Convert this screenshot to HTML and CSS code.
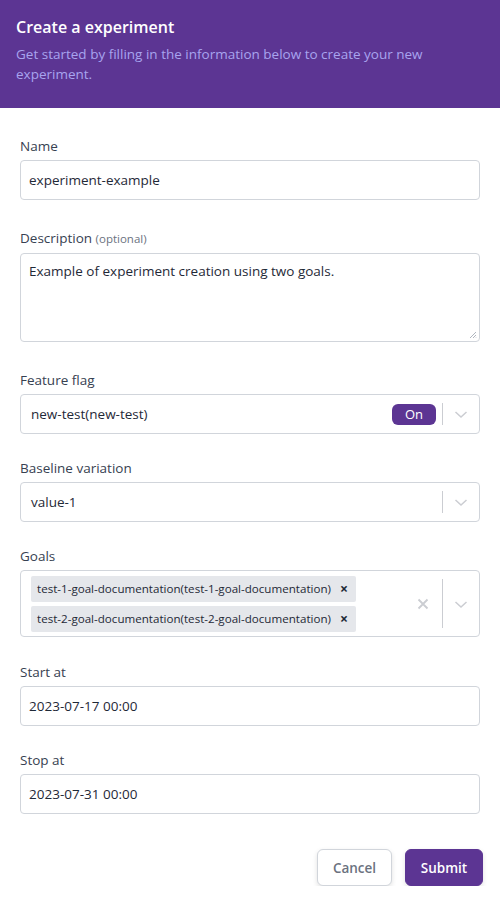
FILE: index.html
```html
<!DOCTYPE html>
<html>
<head>
<meta charset="utf-8">
<link rel="stylesheet" href="styles.css">
</head>
<body>
<div class="page">
  <header class="header">
    <h1 class="title">Create a experiment</h1>
    <p class="subtitle">Get started by filling in the information below to create your new experiment.</p>
  </header>
  <form class="form">
    <div class="field">
      <label class="label">Name</label>
      <div class="input">experiment-example</div>
    </div>
    <div class="field">
      <label class="label">Description <span class="optional">(optional)</span></label>
      <div class="textarea">Example of experiment creation using two goals.
        <svg class="grip" width="8" height="8" viewBox="0 0 8 8"><path d="M7 1L1 7M7 4L4 7M7 6.5L6.5 7" stroke="#9ca3af" stroke-width="0.8"/></svg>
      </div>
    </div>
    <div class="field tight">
      <label class="label">Feature flag</label>
      <div class="select">
        <div class="value">new-test(new-test)</div>
        <span class="badge">On</span>
        <div class="indicators">
          <span class="sep"></span>
          <svg class="chev" width="20" height="20" viewBox="0 0 20 20"><path d="M4.5 8l5.5 5 5.5-5" fill="none" stroke="#cbcdd2" stroke-width="1.5"/></svg>
        </div>
      </div>
    </div>
    <div class="field tight">
      <label class="label">Baseline variation</label>
      <div class="select">
        <div class="value">value-1</div>
        <div class="indicators">
          <span class="sep"></span>
          <svg class="chev" width="20" height="20" viewBox="0 0 20 20"><path d="M4.5 8l5.5 5 5.5-5" fill="none" stroke="#cbcdd2" stroke-width="1.5"/></svg>
        </div>
      </div>
    </div>
    <div class="field goals">
      <label class="label">Goals</label>
      <div class="select multi">
        <div class="chips">
          <span class="chip">test-1-goal-documentation(test-1-goal-documentation)<span class="chip-x">×</span></span>
          <span class="chip">test-2-goal-documentation(test-2-goal-documentation)<span class="chip-x">×</span></span>
        </div>
        <div class="indicators">
          <svg class="clear" width="20" height="20" viewBox="0 0 20 20"><path d="M5.5 5.5l9 9M14.5 5.5l-9 9" stroke="#cbcdd2" stroke-width="1.8"/></svg>
          <span class="sep tall"></span>
          <svg class="chev" width="20" height="20" viewBox="0 0 20 20"><path d="M4.5 8l5.5 5 5.5-5" fill="none" stroke="#cbcdd2" stroke-width="1.5"/></svg>
        </div>
      </div>
    </div>
    <div class="field tight">
      <label class="label">Start at</label>
      <div class="input">2023-07-17 00:00</div>
    </div>
    <div class="field tight">
      <label class="label">Stop at</label>
      <div class="input">2023-07-31 00:00</div>
    </div>
    <div class="actions">
      <button type="button" class="btn cancel">Cancel</button>
      <button type="button" class="btn submit">Submit</button>
    </div>
  </form>
</div>
</body>
</html>
```
FILE: styles.css
```css
* { box-sizing: border-box; }
html, body { margin: 0; padding: 0; background: #fff; }
body {
  font-family: "Open Sans", "Noto Sans", sans-serif;
  color: #374151;
  width: 500px;
}
.header {
  background: #5c3593;
  padding: 15px 16px 24px;
  height: 108px;
}
.title {
  margin: 0;
  font-size: 16px;
  font-weight: 600;
  color: #fff;
  line-height: 24px;
}
.subtitle {
  margin: 5px 0 0;
  font-size: 13.5px;
  line-height: 20px;
  color: #a8a4ef;
}
.form {
  padding: 28px 20px 0;
  display: flex;
  flex-direction: column;
}
.field {
  display: flex;
  flex-direction: column;
  margin-bottom: 28px;
}
.field.tight { margin-bottom: 24px; }
.field.goals { margin-bottom: 25px; }
.label {
  font-size: 13.5px;
  line-height: 20px;
  color: #374151;
  margin-bottom: 4px;
}
.optional {
  font-size: 11.5px;
  color: #6b7280;
}
.input, .textarea, .select {
  border: 1px solid #d1d5db;
  border-radius: 4px;
  font-size: 13.5px;
  color: #1f2937;
  background: #fff;
}
.input {
  height: 40px;
  padding: 0 8px;
  display: flex;
  align-items: center;
}
.textarea {
  height: 89px;
  padding: 7px 8px;
  position: relative;
  line-height: 20px;
}
.grip {
  position: absolute;
  right: 2px;
  bottom: 2px;
}
.select {
  height: 40px;
  display: flex;
  align-items: center;
  padding-left: 10px;
}
.value { flex: 1; }
.badge {
  background: #5c3593;
  color: #fff;
  font-size: 13px;
  padding: 0 13px;
  height: 21px;
  line-height: 21px;
  border-radius: 6px;
  margin-right: 6px;
}
.indicators {
  display: flex;
  align-items: center;
  align-self: stretch;
  padding: 8px 0;
}
.sep {
  width: 1px;
  align-self: stretch;
  background: #cbcdd2;
}
.chev { margin: 0 8px; }
.clear { margin-right: 9px; }
.select.multi {
  height: 67px;
  padding-left: 10px;
}
.chips {
  flex: 1;
  display: flex;
  flex-direction: column;
  align-items: flex-start;
  gap: 4px;
}
.chip {
  background: #e5e7eb;
  font-size: 11.6px;
  color: #1f2937;
  height: 26px;
  line-height: 26px;
  padding: 0 8px 0 6px;
  border-radius: 2px;
  display: inline-flex;
  align-items: center;
}
.chip-x {
  margin-left: 9px;
  font-weight: 700;
  font-size: 14px;
  color: #1f2937;
}
.actions {
  display: flex;
  justify-content: flex-end;
  gap: 13px;
  padding-top: 11px;
  margin-right: -3px;
}
.btn {
  font-family: inherit;
  font-size: 13.5px;
  font-weight: 600;
  height: 37px;
  border-radius: 6px;
  padding: 0 14px;
  cursor: pointer;
  box-shadow: 0 2px 5px rgba(0,0,0,0.12);
}
.cancel {
  background: #fff;
  border: 1px solid #d1d5db;
  color: #6b7280;
  width: 75px;
  padding: 0;
}
.submit {
  background: #5c3593;
  border: 1px solid #5c3593;
  color: #fff;
  width: 78px;
  padding: 0;
}
```
